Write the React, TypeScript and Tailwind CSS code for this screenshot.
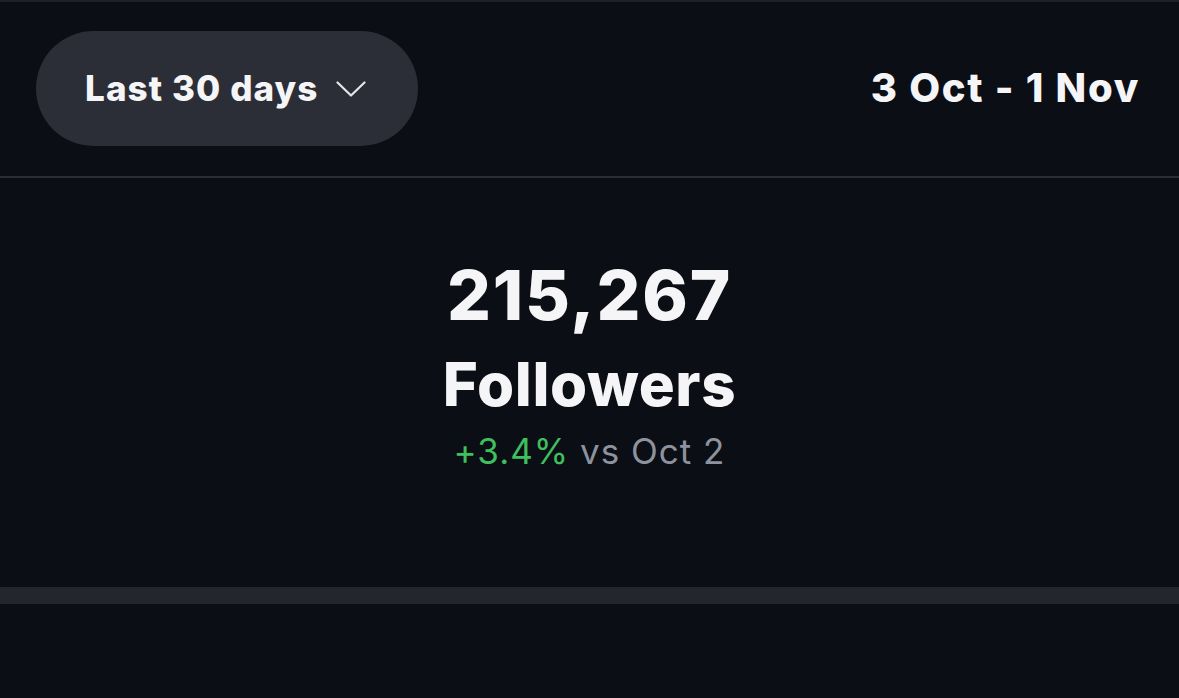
export default function App() {
  return (
    <div
      className="min-h-[698px] w-full bg-[#0b0e14] text-[#f5f5f7] border-t-2 border-[#1d2027]"
      style={{ fontFamily: 'Inter, "Noto Sans", sans-serif' }}
    >
      <header className="flex h-[176px] items-center justify-between pl-9 pr-[39px] pb-[2px] border-b-2 border-[#2a2d35]">
        <button
          type="button"
          className="flex h-[115px] w-[382px] items-center rounded-full bg-[#2b2e36] pl-[49px]"
        >
          <span className="text-[35px] font-extrabold tracking-[1.1px]">Last 30 days</span>
          <svg
            className="ml-[17px] mt-[2px] h-[16px] w-[30px] text-[#e5e6ea]"
            viewBox="0 0 30 16"
            fill="none"
            stroke="currentColor"
            strokeWidth={2.2}
            strokeLinecap="round"
            strokeLinejoin="round"
          >
            <polyline points="1.5,1.5 15,14.5 28.5,1.5" />
          </svg>
        </button>
        <span className="text-[40px] font-extrabold tracking-[1.7px]">3 Oct - 1 Nov</span>
      </header>

      <section className="flex h-[409px] flex-col items-center pt-[83px]">
        <div className="text-[69px] font-extrabold leading-none tracking-[1.8px]">215,267</div>
        <div className="mt-[24px] text-[60px] font-extrabold leading-none tracking-[0.6px]">Followers</div>
        <div className="mt-[20px] text-[35px] leading-none tracking-[1px]">
          <span className="text-[#3fbf5e]">+3.4%</span>
          <span className="text-[#8d939e]"> vs Oct 2</span>
        </div>
      </section>

      <div className="h-[17px] bg-[#23262e]" />
    </div>
  )
}
